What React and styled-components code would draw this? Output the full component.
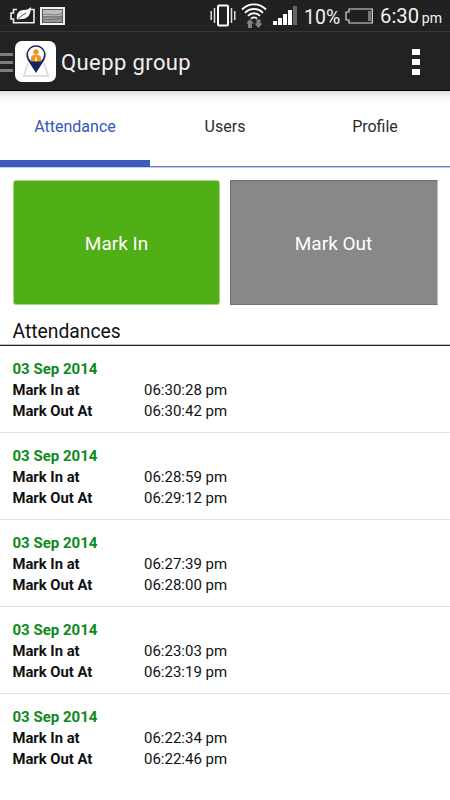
import React from "react";
import styled, { createGlobalStyle } from "styled-components";

const GlobalStyle = createGlobalStyle`
  * {
    box-sizing: border-box;
  }
  body {
    margin: 0;
    background: #fff;
    font-family: Roboto, "Liberation Sans", sans-serif;
  }
`;
const Screen = styled.div`
  width: 450px;
  height: 800px;
  overflow: hidden;
  background: #fff;
`;
const StatusBar = styled.div`
  display: flex;
  align-items: center;
  height: 32px;
  padding: 0 8px 0 10px;
  background: #212121;
  border-bottom: 1px solid #363636;
  color: #f2f2f2;
`;
const StatusIcon = styled.svg`
  display: block;
  flex: none;
  margin-right: ${(props) => props.$gap || 0}px;
`;
const StatusSpacer = styled.div`
  flex: 1;
`;
const BatteryLevel = styled.div`
  width: 41px;
  padding-top: 4px;
  font-size: 19.5px;
  line-height: 28px;
  white-space: nowrap;
`;
const Clock = styled.div`
  display: flex;
  align-items: baseline;
  justify-content: space-between;
  width: 63px;
  padding: 3px 0 0 1px;
  font-size: 20.3px;
  line-height: 28px;
`;
const Meridiem = styled.span`
  font-size: 14px;
`;
const ActionBar = styled.div`
  display: flex;
  align-items: center;
  height: 59px;
  padding-right: 30px;
  background: #222;
  border-bottom: 1px solid #000;
`;
const Drawer = styled.div`
  display: flex;
  flex-direction: column;
  gap: 5px;
  width: 15px;
  padding-top: 2px;
`;
const DrawerLine = styled.div`
  width: 13px;
  height: 3px;
  background: #7d7d7d;
`;
const Logo = styled.div`
  width: 41px;
  height: 41px;
  margin-top: 1px;
  background: #fff;
  border-radius: 7px;
`;
const Title = styled.div`
  flex: 1;
  padding: 2px 0 0 5px;
  color: #f0f0f0;
  font-size: 22px;
  letter-spacing: 0.4px;
`;
const Overflow = styled.div`
  display: flex;
  flex-direction: column;
  gap: 4px;
  padding-top: 1px;
`;
const OverflowDot = styled.div`
  width: 8px;
  height: 6px;
  background: #fff;
`;
const Tabs = styled.div`
  display: flex;
  height: 77px;
  background: linear-gradient(#dcdcdc, #f6f6f6 6px, #fff 14px);
  border-bottom: 1px solid #c3cdee;
`;
const Tab = styled.div`
  flex: 1;
  height: 76px;
  border-bottom: ${(props) =>
    props.$active ? "7px solid #3a5bbb" : "1px solid #6880cb"};
  color: ${(props) => (props.$active ? "#3457bd" : "#2b2b2b")};
  font-size: 16px;
  line-height: 71px;
  text-align: center;
`;
const Buttons = styled.div`
  display: flex;
  gap: 10px;
  padding: 12px 12px 0 13px;
`;
const MarkButton = styled.div`
  display: flex;
  align-items: center;
  justify-content: center;
  height: 125px;
  padding-top: 1px;
  color: #fff;
  font-size: 19px;
`;
const MarkIn = styled(MarkButton)`
  width: 207px;
  background: #50ae16;
  border: 1px solid #a5d785;
  border-radius: 3px;
`;
const MarkOut = styled(MarkButton)`
  width: 208px;
  padding-right: 1px;
  background: #888;
  border: 1px solid #707070;
  border-right-color: #bbb;
`;
const ListTitle = styled.div`
  height: 41px;
  padding: 3px 12.5px 0;
  border-bottom: 1px solid #2c2c2c;
  box-shadow: inset 0 -1px #bbb;
  color: #111;
  font-size: 19.3px;
  line-height: 48px;
`;
const Entry = styled.div`
  height: 87px;
  padding: 13px 12.5px 0;
  border-bottom: 1px solid #e1e1e1;
  color: #111;
  font-size: 15px;
  line-height: 20px;

  &:last-child {
    border-bottom: none;
  }
`;
const EntryDate = styled.div`
  height: 21px;
  line-height: 21px;
  color: #0c8a1c;
  font-weight: 700;
`;
const EntryRow = styled.div`
  display: flex;
  height: 20.5px;
  line-height: 20.5px;
`;
const EntryLabel = styled.div`
  width: 131.5px;
  font-size: 14.8px;
  font-weight: 700;
`;

const attendances = [
  { markIn: "06:30:28 pm", markOut: "06:30:42 pm" },
  { markIn: "06:28:59 pm", markOut: "06:29:12 pm" },
  { markIn: "06:27:39 pm", markOut: "06:28:00 pm" },
  { markIn: "06:23:03 pm", markOut: "06:23:19 pm" },
  { markIn: "06:22:34 pm", markOut: "06:22:46 pm" },
];

const PowerSaver = () => (
  <StatusIcon $gap={5} width="25" height="18" viewBox="0 0 25 18">
    <path
      d="M7 2.500H3.500V6H1v6h2.500v3.800h20.500V2.500h-3"
      fill="none"
      stroke="#eee"
      strokeWidth="1.600"
    />
    <path d="M7 13C6 6 9 3 14 3c3 0 5-1 7-3 0 7-3 12-9 12-2 0-3 0-5 1z" fill="#fff" />
    <path d="M6 14.500c3-4 6-6 10-8.500" fill="none" stroke="#333" strokeWidth="0.900" />
  </StatusIcon>
);

const Picture = () => (
  <StatusIcon width="25" height="18" viewBox="0 0 25 18">
    <rect x="1" y="1" width="23" height="16" fill="#444" stroke="#f0f0f0" strokeWidth="2" />
    <rect x="2.800" y="2.800" width="19.400" height="6.200" fill="#bdbdbd" />
    <rect x="2.800" y="9" width="19.400" height="6.200" fill="#999" />
    <path
      d="M3 7.500c6-1 10 2 19-1M3 10c7-1 12 1 19-1M3 13c6-1 13 0 19-2"
      fill="none"
      stroke="#555"
      strokeWidth="0.600"
    />
  </StatusIcon>
);

const Vibrate = () => (
  <StatusIcon $gap={5} width="26" height="23" viewBox="0 0 26 23">
    <rect x="8" y="1.500" width="10" height="20" rx="1" fill="none" stroke="#fff" strokeWidth="2" />
    <path d="M4.500 4v15M21.500 4v15M1.200 7v9M24.800 7v9" stroke="#ddd" strokeWidth="1.500" />
  </StatusIcon>
);

const Wifi = () => (
  <StatusIcon $gap={6} width="26" height="25" viewBox="0 0 26 25">
    <path
      d="M1 6.500C8-.3 18-.3 25 6.500M4 9.800c5-5 13-5 18 0M7 12.900c3.400-3.600 8.600-3.600 12 0M10 15.600c1.600-1.700 4.400-1.700 6 0"
      fill="none"
      stroke="#fff"
      strokeWidth="1.900"
    />
    <path d="M9 16l4 4.500h-2V25H7v-4.500H5zM17.500 25l-4-4.500h2V16.500h4v4h2z" fill="#828282" />
  </StatusIcon>
);

const Signal = () => (
  <StatusIcon $gap={6} width="25" height="19" viewBox="0 0 25 19">
    <path d="M0 15h4v4H0zM5 12h4v7H5zM10 8h4v11h-4zM15 4h4v15h-4z" fill="#fff" />
    <path d="M20 0h4v19h-4z" fill="#666" />
  </StatusIcon>
);

const Battery = () => (
  <StatusIcon $gap={6} width="28" height="16" viewBox="0 0 28 16">
    <path
      d="M4 1h23.300v14H4v-3H1V4h3z"
      fill="none"
      stroke="#ddd"
      strokeWidth="1.200"
    />
    <path d="M23 3h3v10h-3z" fill="#777" />
  </StatusIcon>
);

const PinLogo = () => (
  <svg width="41" height="41" viewBox="0 0 41 41">
    <path
      d="M13 22L8.800 35h24.400L29 22"
      fill="none"
      stroke="#d7d7d7"
      strokeWidth="1.500"
    />
    <path
      d="M21 32L13 19.500a9.700 9.700 0 1 1 16 0z"
      fill="#14285c"
    />
    <path d="M15.500 19.500a8 8 0 1 1 11 0z" fill="#fff" />
    <circle cx="21" cy="11" r="2.700" fill="#f7941d" />
    <path d="M16 20.500V17c0-2 1.300-3 3.200-3h3.600c1.900 0 3.200 1 3.200 3v3.500z" fill="#f7941d" />
    <path d="M20.500 16h1l.4 4h-1.800z" fill="#fff" />
  </svg>
);

const App = () => {
  return (
    <Screen>
      <GlobalStyle />
      <StatusBar>
        <PowerSaver />
        <Picture />
        <StatusSpacer />
        <Vibrate />
        <Wifi />
        <Signal />
        <BatteryLevel>10%</BatteryLevel>
        <Battery />
        <Clock>
          6:30<Meridiem>pm</Meridiem>
        </Clock>
      </StatusBar>
      <ActionBar>
        <Drawer>
          <DrawerLine />
          <DrawerLine />
          <DrawerLine />
        </Drawer>
        <Logo>
          <PinLogo />
        </Logo>
        <Title>Quepp group</Title>
        <Overflow>
          <OverflowDot />
          <OverflowDot />
          <OverflowDot />
        </Overflow>
      </ActionBar>
      <Tabs>
        <Tab $active>Attendance</Tab>
        <Tab>Users</Tab>
        <Tab>Profile</Tab>
      </Tabs>
      <Buttons>
        <MarkIn>Mark In</MarkIn>
        <MarkOut>Mark Out</MarkOut>
      </Buttons>
      <ListTitle>Attendances</ListTitle>
      {attendances.map((item) => (
        <Entry key={item.markIn}>
          <EntryDate>03 Sep 2014</EntryDate>
          <EntryRow>
            <EntryLabel>Mark In at</EntryLabel>
            <div>{item.markIn}</div>
          </EntryRow>
          <EntryRow>
            <EntryLabel>Mark Out At</EntryLabel>
            <div>{item.markOut}</div>
          </EntryRow>
        </Entry>
      ))}
    </Screen>
  );
};

export default App;
